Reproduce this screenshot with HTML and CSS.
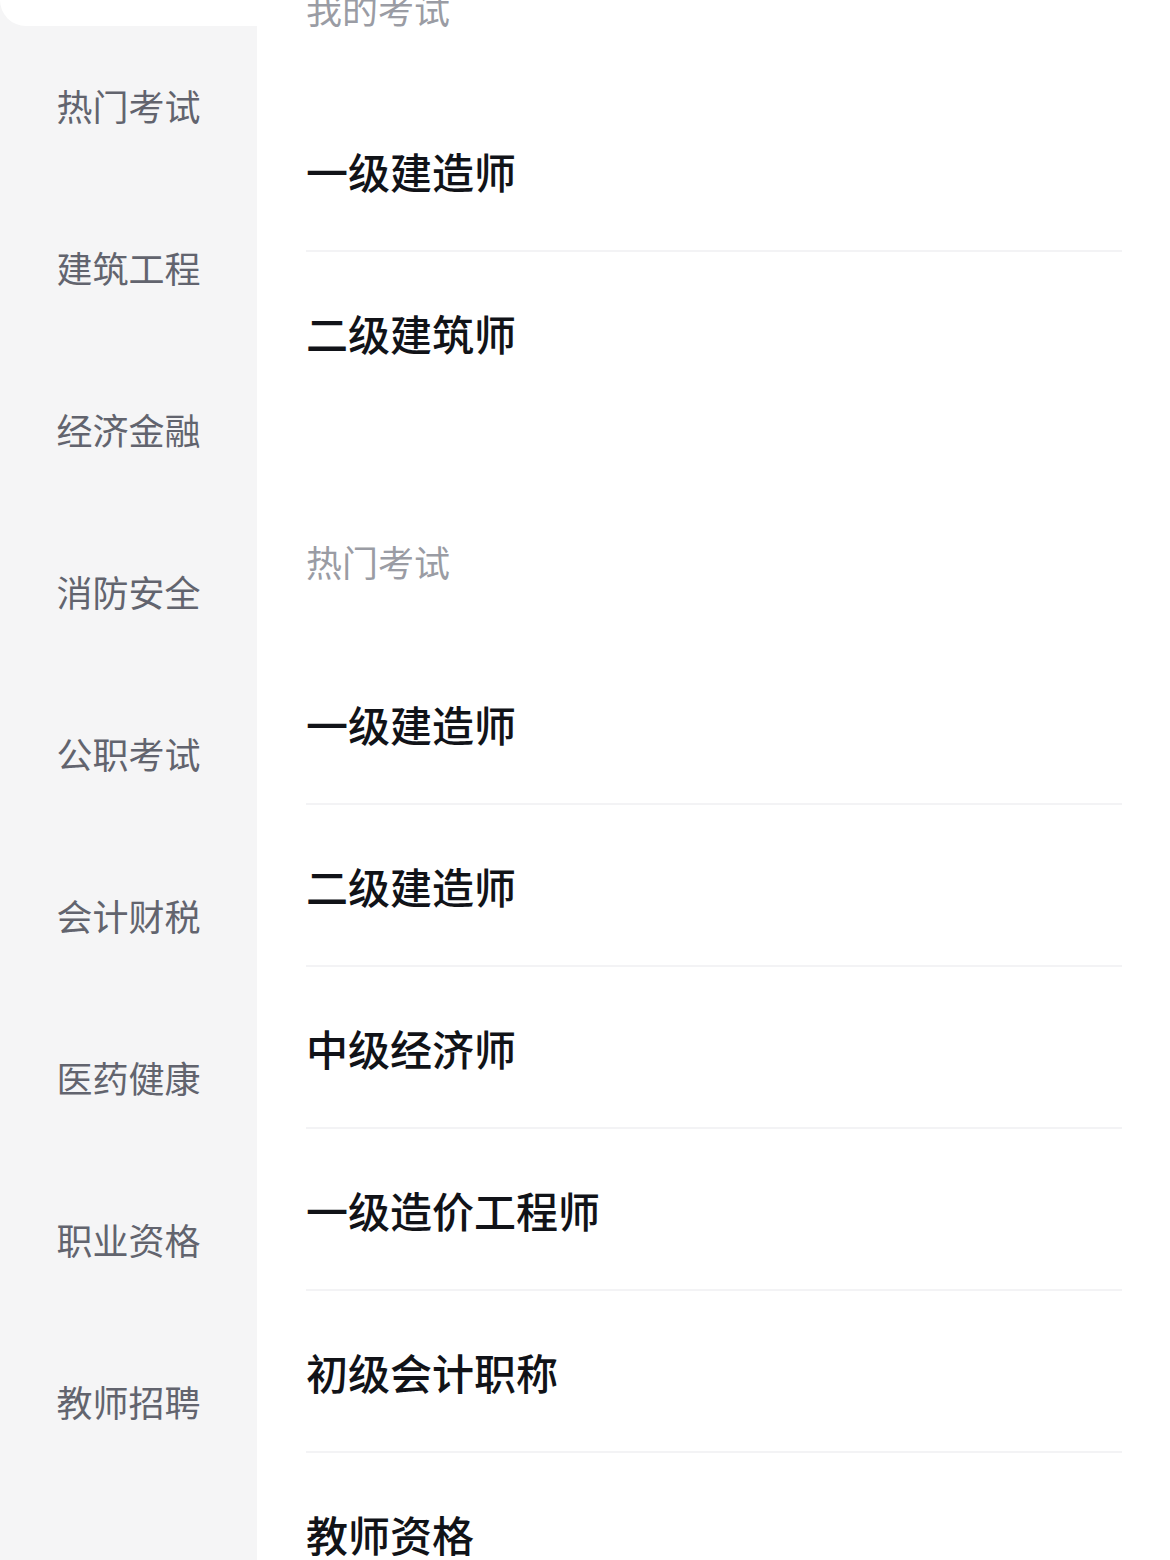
FILE: index.html
```html
<!doctype html>
<html>
<head>
    <meta name="viewport" content="width=device-width, initial-scale=1.0">
    <title>选择考试</title>
    <link rel="stylesheet" href="styles.css">
</head>
<body>
    <div class="page">
        <div class="sidebar">
            <div class="side-item active">我的考试</div>
            <div class="side-item">热门考试</div>
            <div class="side-item">建筑工程</div>
            <div class="side-item">经济金融</div>
            <div class="side-item">消防安全</div>
            <div class="side-item">公职考试</div>
            <div class="side-item">会计财税</div>
            <div class="side-item">医药健康</div>
            <div class="side-item">职业资格</div>
            <div class="side-item">教师招聘</div>
        </div>
        <div class="content">
            <div class="section">
                <div class="section-title">我的考试</div>
                <div class="exam-row">一级建造师</div>
                <div class="exam-row">二级建筑师</div>
            </div>
            <div class="section">
                <div class="section-title">热门考试</div>
                <div class="exam-row">一级建造师</div>
                <div class="exam-row">二级建造师</div>
                <div class="exam-row">中级经济师</div>
                <div class="exam-row">一级造价工程师</div>
                <div class="exam-row">初级会计职称</div>
                <div class="exam-row">教师资格</div>
            </div>
        </div>
    </div>
</body>
</html>
```

FILE: styles.css
```css
body {
    margin: 0;
    padding: 0;
    background-color: #fff;
    font-family: "Noto Sans CJK SC", "Noto Sans", sans-serif;
    overflow: hidden;
}
/* page is scrolled down a bit, first item half hidden */
.page {
    display: flex;
    margin-top: -136px;
    min-height: 1700px;
}
.sidebar {
    width: 257px;
    flex-shrink: 0;
    background-color: #f5f5f6;
}
.side-item {
    height: 158px;
    padding-bottom: 4px;
    display: flex;
    align-items: center;
    justify-content: center;
    font-size: 36px;
    color: #62646e;
}
.side-item.active {
    background-color: #fff;
    border-radius: 26px 0 0 26px;
}
.content {
    flex: 1;
    padding: 126px 48px 0 49px;
}
.section + .section {
    margin-top: 129px;
}
.section-title {
    font-size: 36px;
    line-height: 36px;
    color: #9a9ca4;
    margin-bottom: 64px;
}
.exam-row {
    height: 160px;
    display: flex;
    align-items: center;
    font-size: 42px;
    font-weight: 500;
    color: #111318;
    border-bottom: 2px solid #f3f3f5;
}
.exam-row:last-child {
    border-bottom-color: transparent;
}
```
